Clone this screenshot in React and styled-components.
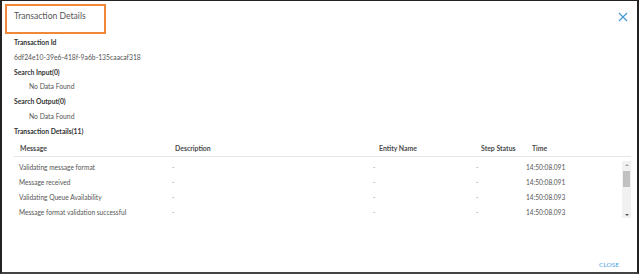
import React from 'react';
import styled, { createGlobalStyle } from 'styled-components';

const Global = createGlobalStyle`
  html, body { margin: 0; padding: 0; background: #fff; }
  body { font-family: Lato, "Open Sans", sans-serif; }
`;

// only the rows in view; the rest sit below the scroll
const rows = [
  ['Validating message format', '-', '-', '-', '14:50:08.091'],
  ['Message received', '-', '-', '-', '14:50:08.091'],
  ['Validating Queue Availability', '-', '-', '-', '14:50:08.093'],
  ['Message format validation successful', '-', '-', '-', '14:50:08.093'],
];

const Frame = styled.div`
  width: 639px;
  height: 274px;
  box-sizing: border-box;
  border: 1px solid #222;
  border-left-width: 2px;
  border-right-width: 2px;
  border-bottom: 2px solid #444;
  display: flex;
  flex-direction: column;
  padding: 3px 0 0 3px;
`;

const Header = styled.div`
  display: flex;
  justify-content: space-between;
  align-items: flex-start;
  padding-right: 9px;
`;

const TitleBox = styled.div`
  width: 101px;
  height: 30px;
  box-sizing: border-box;
  border: 2px solid #f0883a;
  padding: 5px 0 0 7px;
  font-size: 8.6px;
  color: #555;
`;

const CloseX = styled.button`
  border: none;
  background: none;
  padding: 0;
  margin-top: 8px;
  width: 10px;
  height: 10px;
  display: flex;
  cursor: pointer;
`;

const Body = styled.div`
  padding: 1px 7px 0 9px;
  flex: 1;
  display: flex;
  flex-direction: column;
`;

const Label = styled.div`
  font-size: 6.8px;
  font-weight: 700;
  color: #333;
  line-height: 14.8px;
`;

const Value = styled.div`
  font-size: 6.8px;
  color: #555;
  line-height: 14.8px;
  padding-left: ${p => (p.$indent ? '15px' : '0')};
`;

const Table = styled.div`
  margin-top: 2px;
  width: 617px;
`;

const HeadRow = styled.div`
  display: grid;
  grid-template-columns: 155px 204px 102px 51px 1fr;
  padding-left: 6px;
  height: 15px;
  align-items: center;
  border-bottom: 1px solid #e6e6e6;
`;

const HeadCell = styled.div`
  font-size: 6.9px;
  font-weight: 700;
  color: #4a4a4a;
`;

const BodyWrap = styled.div`
  display: flex;
  padding-top: 3px;
`;

const Rows = styled.div`
  flex: 1;
  height: 60px;
`;

const Row = styled.div`
  display: grid;
  grid-template-columns: 153px 201px 103px 50px 1fr;
  padding-left: 5px;
  height: 15px;
  align-items: center;
  font-size: 6.6px;
  color: #555;
`;

const Dash = styled.span`
  color: #999;
`;

const Scrollbar = styled.div`
  width: 9px;
  height: 57px;
  margin-top: 1px;
  background: #f1f1f1;
  display: flex;
  flex-direction: column;
  align-items: center;
  justify-content: space-between;
  padding: 3px 0 2px;
  box-sizing: border-box;
`;

const Track = styled.div`
  flex: 1;
  width: 100%;
  margin: 3px 0;
`;

const Thumb = styled.div`
  width: 7px;
  height: 16px;
  margin: 2px auto 0;
  background: #c1c1c1;
`;

const Arrow = styled.div`
  width: 0;
  height: 0;
  border-left: 2px solid transparent;
  border-right: 2px solid transparent;
  ${p => (p.$down ? 'border-top: 2px solid #555;' : 'border-bottom: 2px solid #a3a3a3;')}
`;

const Footer = styled.div`
  margin-top: auto;
  display: flex;
  justify-content: flex-end;
  padding: 0 18px 4px 0;
`;

const CloseLink = styled.button`
  border: none;
  background: none;
  padding: 0;
  font-family: inherit;
  font-size: 6.5px;
  color: #4a9fdc;
  cursor: pointer;
`;

export default function App() {
  return (
    <>
      <Global />
      <Frame>
        <Header>
          <TitleBox>Transaction Details</TitleBox>
          <CloseX aria-label="close">
            <svg width="10" height="10" viewBox="0 0 10 10">
              <path d="M1 1 L9 9 M9 1 L1 9" stroke="#3f97d6" strokeWidth="1.1" fill="none" />
            </svg>
          </CloseX>
        </Header>
        <Body>
          <Label>Transaction Id</Label>
          <Value>6df24e10-39e6-418f-9a6b-135caacaf318</Value>
          <Label>Search Input(0)</Label>
          <Value $indent>No Data Found</Value>
          <Label>Search Output(0)</Label>
          <Value $indent>No Data Found</Value>
          <Label>Transaction Details(11)</Label>
          <Table>
            <HeadRow>
              <HeadCell>Message</HeadCell>
              <HeadCell>Description</HeadCell>
              <HeadCell>Entity Name</HeadCell>
              <HeadCell>Step Status</HeadCell>
              <HeadCell>Time</HeadCell>
            </HeadRow>
            <BodyWrap>
              <Rows>
                {rows.map((r, i) => (
                  <Row key={i}>
                    <span>{r[0]}</span>
                    <Dash>{r[1]}</Dash>
                    <Dash>{r[2]}</Dash>
                    <Dash>{r[3]}</Dash>
                    <span>{r[4]}</span>
                  </Row>
                ))}
              </Rows>
              <Scrollbar>
                <Arrow />
                <Track><Thumb /></Track>
                <Arrow $down />
              </Scrollbar>
            </BodyWrap>
          </Table>
        </Body>
        <Footer>
          <CloseLink>CLOSE</CloseLink>
        </Footer>
      </Frame>
    </>
  );
}
